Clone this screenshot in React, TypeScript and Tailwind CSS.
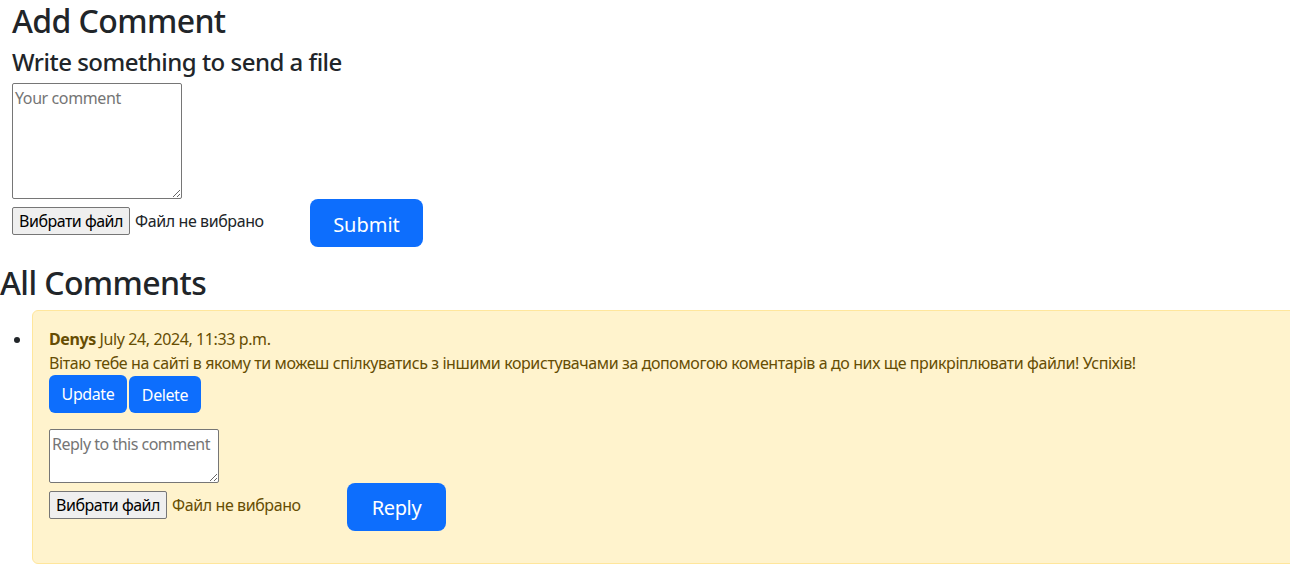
import React from "react";

const font = { fontFamily: '"Noto Sans", "Open Sans", sans-serif' };

function FileInput({ textColor }: { textColor: string }) {
  return (
    <div className="flex items-center w-[298px] shrink-0 mb-[4px]">
      <span className="h-[28px] w-[118px] flex items-center justify-center border border-[#767676] bg-[#efefef] rounded-[2px] text-[16px] tracking-[-0.5px] text-black leading-none">
        Вибрати файл
      </span>
      <span className={`ml-[5px] text-[16px] tracking-[-0.4px] ${textColor}`}>Файл не вибрано</span>
    </div>
  );
}

export default function App() {
  return (
    <div className="w-[1290px] h-[566px] overflow-hidden bg-white text-[#212529] text-[16px] leading-[1.5]" style={font}>
      <div className="px-[12px]">
        <h2 className="pt-[2px] text-[32px] leading-[1.2] font-medium tracking-[-0.6px] mb-[8px]">Add Comment</h2>
        <h4 className="text-[24px] leading-[1.2] font-medium tracking-[-0.5px] mb-[6px]">Write something to send a file</h4>
        <textarea
          placeholder="Your comment"
          className="block w-[170px] h-[116px] border border-[#767676] rounded-[2px] p-[2px] text-[16px] leading-[1.5] tracking-[-0.4px] placeholder:text-[#757575] resize-y"
        />
        <div className="flex items-center h-[48px]">
          <FileInput textColor="text-[#212529]" />
          <button className="h-[48px] w-[113px] pt-[3px] rounded-[8px] bg-[#0d6efd] text-white text-[20px]">
            Submit
          </button>
        </div>
      </div>
      <h2 className="text-[32px] leading-[1.2] font-medium tracking-[-0.6px] mt-[17px] mb-[7px]">All Comments</h2>
      <ul className="list-disc pl-[32px]">
        <li className="mr-[-20px] marker:text-[#212529]">
          <div className="bg-[#fff3cd] border border-[#ffe69c] rounded-[6px] p-[16px] text-[#664d03] tracking-[-0.4px]">
            <div>
              <strong className="font-bold">Denys</strong> July 24, 2024, 11:33 p.m.
            </div>
            <div>
              Вітаю тебе на сайті в якому ти можеш спілкуватись з іншими користувачами за допомогою коментарів а до них ще прикріплювати файли! Успіхів!
            </div>
            <div className="flex gap-[2px]">
              <button className="h-[38px] w-[78px] pt-[1px] rounded-[6px] bg-[#0d6efd] text-white text-[16px]">Update</button>
              <button className="h-[37px] w-[72px] pt-[2px] mt-[1px] rounded-[6px] bg-[#0d6efd] text-white text-[16px]">Delete</button>
            </div>
            <textarea
              placeholder="Reply to this comment"
              className="block mt-[16px] w-[170px] h-[54px] bg-white border border-[#767676] rounded-[2px] p-[2px] text-[16px] leading-[1.5] tracking-[-0.5px] placeholder:text-[#757575] resize-y"
            />
            <div className="flex items-center h-[48px] mb-[16px]">
              <FileInput textColor="text-[#664d03]" />
              <button className="h-[48px] w-[99px] pt-[3px] rounded-[8px] bg-[#0d6efd] text-white text-[20px]">
                Reply
              </button>
            </div>
          </div>
        </li>
      </ul>
    </div>
  );
}
